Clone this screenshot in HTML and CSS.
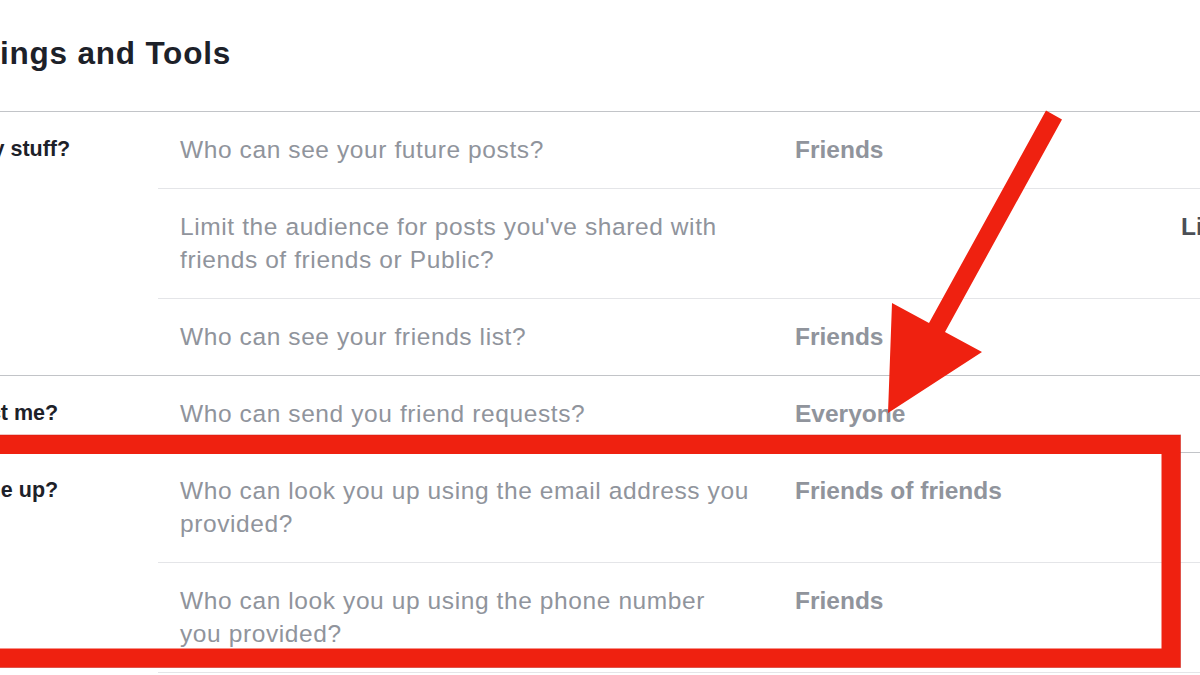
FILE: index.html
```html
<!DOCTYPE html>
<html lang="en">
<head>
<meta charset="utf-8">
<title>Privacy Settings and Tools</title>
<link rel="stylesheet" href="styles.css">
</head>
<body>
<div class="page">
  <h1 class="title">Privacy Settings and Tools</h1>

  <section class="section">
    <div class="label">Who can see my stuff?</div>
    <div class="rows">
      <div class="row">
        <div class="q">Who can see your future posts?</div>
        <div class="v">Friends</div>
        <div class="a">Edit</div>
      </div>
      <div class="row">
        <div class="q">Limit the audience for posts you've shared with friends of friends or Public?</div>
        <div class="v"></div>
        <div class="a">Limit Past Posts</div>
      </div>
      <div class="row">
        <div class="q">Who can see your friends list?</div>
        <div class="v">Friends</div>
        <div class="a">Edit</div>
      </div>
    </div>
  </section>

  <section class="section">
    <div class="label">Who can contact me?</div>
    <div class="rows">
      <div class="row">
        <div class="q">Who can send you friend requests?</div>
        <div class="v">Everyone</div>
        <div class="a">Edit</div>
      </div>
    </div>
  </section>

  <section class="section">
    <div class="label">Who can look me up?</div>
    <div class="rows">
      <div class="row">
        <div class="q">Who can look you up using the email address you provided?</div>
        <div class="v">Friends of friends</div>
        <div class="a">Edit</div>
      </div>
      <div class="row last">
        <div class="q">Who can look you up using the phone number<br>you provided?</div>
        <div class="v">Friends</div>
        <div class="a">Edit</div>
      </div>
    </div>
  </section>
</div>

<svg class="marks" width="1200" height="675" viewBox="0 0 1200 675" aria-hidden="true">
  <rect x="-20" y="444.5" width="1191" height="213.5" fill="none" stroke="#ef2110" stroke-width="19"/>
  <rect x="-29.5" y="435" width="1210" height="232.5" fill="none" stroke="#c81a10" stroke-width="1" opacity="0.5"/>
  <polygon points="1046,110.6 1062,119.4 945,332 982,352 888,413 892,303 929,323" fill="#ef2110"/>
</svg>
</body>
</html>
```
FILE: styles.css
```css
html, body {
  margin: 0;
  padding: 0;
  background: #ffffff;
}

body {
  width: 1200px;
  height: 675px;
  overflow: hidden;
  position: relative;
  font-family: "Liberation Sans", Arial, Helvetica, sans-serif;
}

.page {
  margin-left: -164px;
  width: 1500px;
}

.title {
  margin: 0 0 0 -26px;
  padding: 35px 0 40px 0;
  font-size: 31.5px;
  line-height: 36px;
  font-weight: 700;
  letter-spacing: 0.8px;
  color: #1d2129;
}

.section {
  display: flex;
  border-top: 1px solid #c2c4c8;
}

.label {
  width: 322px;
  padding: 21px 0 0 0;
  font-size: 21.5px;
  line-height: 33px;
  font-weight: 700;
  color: #1d2129;
  flex: none;
}

.rows {
  flex: 1;
}

.row {
  display: flex;
  padding: 21px 0 22px;
  border-top: 1px solid #e4e5e8;
  font-size: 24.5px;
  line-height: 33px;
}

.row:first-child {
  border-top: none;
}

.row.last {
  border-bottom: 1px solid #e4e5e8;
}

.q {
  width: 637px;
  box-sizing: border-box;
  padding: 0 36px 0 22px;
  color: #90949c;
  letter-spacing: 0.6px;
  flex: none;
}

.v {
  width: 386px;
  flex: none;
  font-weight: 700;
  color: #90949c;
}

.a {
  width: 189px;
  flex: none;
  font-weight: 700;
  color: #4b4f56;
  white-space: nowrap;
  text-align: right;
}

.marks {
  position: absolute;
  left: 0;
  top: 0;
  pointer-events: none;
}
```
